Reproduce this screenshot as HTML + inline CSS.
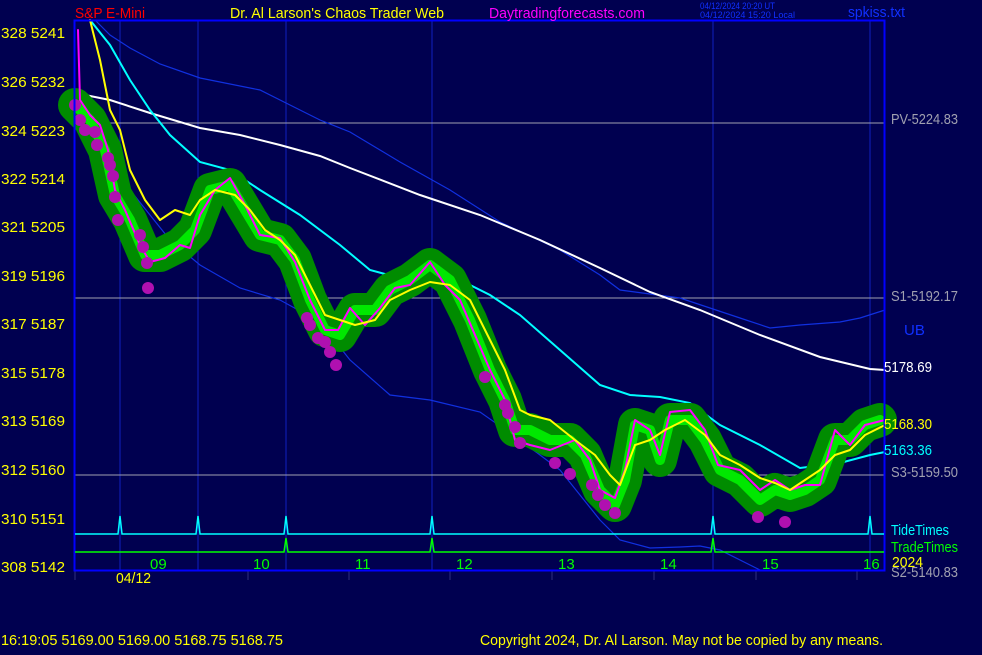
<!DOCTYPE html>
<html><head><style>
body{margin:0;background:#000050;width:982px;height:650px;overflow:hidden}
svg text{font-family:"Liberation Sans Narrow","Liberation Sans",sans-serif;font-size:15px}
</style></head><body>
<svg width="982" height="650" viewBox="0 0 982 650" xmlns="http://www.w3.org/2000/svg">
<rect width="982" height="650" fill="#000050"/>
<g stroke="#1020c0" stroke-width="1">
<line x1="120" y1="20" x2="120" y2="570"/><line x1="198" y1="20" x2="198" y2="570"/>
<line x1="286" y1="20" x2="286" y2="570"/><line x1="432" y1="20" x2="432" y2="570"/>
<line x1="713" y1="20" x2="713" y2="570"/><line x1="870" y1="20" x2="870" y2="570"/>
</g>
<g stroke="#a0a0b0" stroke-width="1">
<line x1="75" y1="123" x2="884" y2="123"/><line x1="75" y1="298" x2="884" y2="298"/><line x1="75" y1="475" x2="884" y2="475"/>
</g>
<g stroke="#303080" stroke-width="1">
<line x1="75" y1="571" x2="75" y2="580"/><line x1="248" y1="571" x2="248" y2="580"/><line x1="349" y1="571" x2="349" y2="580"/><line x1="450" y1="571" x2="450" y2="580"/><line x1="552" y1="571" x2="552" y2="580"/><line x1="654" y1="571" x2="654" y2="580"/><line x1="756" y1="571" x2="756" y2="580"/><line x1="857" y1="571" x2="857" y2="580"/>
</g>
<g fill="none" stroke="#1030e0" stroke-width="1.2">
<polyline points="95,20 110,35 130,48 160,64 200,78 260,90 290,105 320,120 350,132 380,150 400,162 450,190 500,222 560,250 600,275 620,290 680,298 740,318 770,328 800,325 840,322 860,318 885,310"/>
<polyline points="130,190 170,240 200,265 240,288 280,300 320,322 350,360 390,395 430,400 480,412 520,440 560,470 600,520 620,540 650,548 680,547 700,546 720,550 760,570"/>
</g>
<polyline fill="none" stroke="#ffffff" stroke-width="2" points="75,93 110,100 150,113 200,128 240,135 280,145 320,156 350,168 420,195 480,215 540,240 600,268 650,292 700,310 760,335 820,357 870,369 885,370"/>
<polyline fill="none" stroke="#00ffff" stroke-width="2" points="90,20 110,45 130,80 150,110 170,135 200,162 230,170 260,190 300,215 340,245 370,270 400,278 430,280 470,285 490,295 520,315 560,350 600,385 630,395 660,397 690,403 720,425 760,445 800,468 840,463 870,455 885,452"/>
<g stroke-linecap="round" stroke-linejoin="round" fill="none">
<polyline stroke="#008c00" stroke-width="34" points="75,105 90,120 105,150 115,195 130,220 145,255 160,255 180,245 195,230 210,190 230,185 245,210 260,235 280,240 295,260 310,300 325,330 340,335 355,310 375,310 390,290 410,280 430,265 450,280 470,320 490,370 505,400 515,430 530,430 550,440 570,440 585,455 600,490 615,505 625,480 635,425 650,430 660,460 670,420 690,420 705,440 720,470 740,480 760,500 775,490 790,495 805,490 820,480 835,440 850,440 865,425 880,420"/>
<polyline stroke="#00ff00" stroke-width="10" opacity="0.8" points="75,105 90,120 105,150 115,195 130,220 145,255 160,255 180,245 195,230 210,190 230,185 245,210 260,235 280,240 295,260 310,300 325,330 340,335 355,310 375,310 390,290 410,280 430,265 450,280 470,320 490,370 505,400 515,430 530,430 550,440 570,440 585,455 600,490 615,505 625,480 635,425 650,430 660,460 670,420 690,420 705,440 720,470 740,480 760,500 775,490 790,495 805,490 820,480 835,440 850,440 865,425 880,420"/>
<polyline stroke="#ff00ff" stroke-width="2" points="78,30 80,100 90,115 100,125 108,150 115,190 125,210 140,245 150,262 165,258 180,245 190,248 200,215 215,190 230,178 245,205 260,235 280,238 295,262 310,300 325,330 338,330 350,308 365,325 380,308 395,288 410,285 430,262 445,285 460,300 475,335 490,370 505,400 515,440 530,445 550,450 575,440 590,460 600,490 615,498 625,470 635,420 650,430 660,455 670,412 690,410 705,430 718,465 740,470 760,490 775,480 790,490 805,485 820,485 835,430 850,445 865,425 885,420"/>
<polyline stroke="#ffff00" stroke-width="2" points="90,20 100,60 110,110 120,130 130,170 145,200 160,220 175,210 190,215 200,200 215,190 235,195 250,210 265,230 280,240 295,255 310,285 325,315 340,320 355,325 375,320 390,300 410,290 430,282 450,285 470,300 490,340 505,370 520,410 530,415 550,420 575,440 595,455 610,475 620,485 635,445 650,440 665,430 685,420 705,435 720,455 740,465 760,478 775,483 790,490 805,480 820,470 835,455 850,450 865,435 885,425"/>
</g>
<g fill="#b010b0">
<circle cx="75" cy="105" r="6"/><circle cx="80" cy="120" r="6"/><circle cx="85" cy="130" r="6"/><circle cx="95" cy="132" r="6"/><circle cx="97" cy="145" r="6"/>
<circle cx="108" cy="158" r="6"/><circle cx="110" cy="165" r="6"/><circle cx="113" cy="176" r="6"/><circle cx="115" cy="197" r="6"/><circle cx="118" cy="220" r="6"/>
<circle cx="140" cy="235" r="6"/><circle cx="143" cy="247" r="6"/><circle cx="147" cy="263" r="6"/><circle cx="148" cy="288" r="6"/>
<circle cx="307" cy="318" r="6"/><circle cx="310" cy="325" r="6"/><circle cx="318" cy="338" r="6"/><circle cx="325" cy="342" r="6"/><circle cx="330" cy="352" r="6"/><circle cx="336" cy="365" r="6"/>
<circle cx="485" cy="377" r="6"/><circle cx="505" cy="405" r="6"/><circle cx="508" cy="413" r="6"/><circle cx="515" cy="427" r="6"/><circle cx="520" cy="443" r="6"/><circle cx="555" cy="463" r="6"/><circle cx="570" cy="474" r="6"/>
<circle cx="592" cy="485" r="6"/><circle cx="598" cy="495" r="6"/><circle cx="605" cy="505" r="6"/><circle cx="615" cy="513" r="6"/><circle cx="758" cy="517" r="6"/><circle cx="785" cy="522" r="6"/>
</g>
<rect x="74.5" y="20.5" width="810" height="550" fill="none" stroke="#0000ff" stroke-width="2"/>
<g fill="none" stroke="#00ffff" stroke-width="1.5">
<polyline points="75,534 118,534 120,516 122,534 196,534 198,516 200,534 284,534 286,516 288,534 430,534 432,516 434,534 711,534 713,516 715,534 868,534 870,516 872,534 884,534"/>
</g>
<polyline fill="none" stroke="#00ff00" stroke-width="1.5" points="75,552 284,552 286,538 288,552 430,552 432,538 434,552 711,552 713,538 715,552 884,552"/>
<g fill="#ffff00" lengthAdjust="spacingAndGlyphs">
<text x="1" y="38" textLength="64" lengthAdjust="spacingAndGlyphs">328  5241</text><text x="1" y="87" textLength="64" lengthAdjust="spacingAndGlyphs">326  5232</text><text x="1" y="136" textLength="64" lengthAdjust="spacingAndGlyphs">324  5223</text><text x="1" y="184" textLength="64" lengthAdjust="spacingAndGlyphs">322  5214</text>
<text x="1" y="232" textLength="64" lengthAdjust="spacingAndGlyphs">321  5205</text><text x="1" y="281" textLength="64" lengthAdjust="spacingAndGlyphs">319  5196</text><text x="1" y="329" textLength="64" lengthAdjust="spacingAndGlyphs">317  5187</text><text x="1" y="378" textLength="64" lengthAdjust="spacingAndGlyphs">315  5178</text>
<text x="1" y="426" textLength="64" lengthAdjust="spacingAndGlyphs">313  5169</text><text x="1" y="475" textLength="64" lengthAdjust="spacingAndGlyphs">312  5160</text><text x="1" y="524" textLength="64" lengthAdjust="spacingAndGlyphs">310  5151</text><text x="1" y="572" textLength="64" lengthAdjust="spacingAndGlyphs">308  5142</text>
<text x="116" y="583" textLength="35" lengthAdjust="spacingAndGlyphs">04/12</text><text x="892" y="567" textLength="31" lengthAdjust="spacingAndGlyphs">2024</text><text x="884" y="429" textLength="48" lengthAdjust="spacingAndGlyphs">5168.30</text>
<text x="1" y="645" textLength="282" lengthAdjust="spacingAndGlyphs">16:19:05  5169.00 5169.00 5168.75 5168.75</text>
<text x="480" y="645" textLength="403" lengthAdjust="spacingAndGlyphs">Copyright 2024, Dr. Al Larson. May not be copied by any means.</text>
<text x="230" y="18" textLength="214" lengthAdjust="spacingAndGlyphs">Dr. Al Larson's Chaos Trader Web</text>
</g>
<g fill="#00ff00"><text x="150" y="569">09</text><text x="253" y="569">10</text><text x="355" y="569">11</text><text x="456" y="569">12</text><text x="558" y="569">13</text><text x="660" y="569">14</text><text x="762" y="569">15</text><text x="863" y="569">16</text><text x="891" y="552" textLength="67" lengthAdjust="spacingAndGlyphs">TradeTimes</text></g>
<text x="891" y="535" fill="#00ffff" textLength="58" lengthAdjust="spacingAndGlyphs">TideTimes</text>
<text x="884" y="455" fill="#00ffff" textLength="48" lengthAdjust="spacingAndGlyphs">5163.36</text>
<text x="884" y="372" fill="#ffffff" textLength="48" lengthAdjust="spacingAndGlyphs">5178.69</text>
<g fill="#a0a0b0"><text x="891" y="124" textLength="67" lengthAdjust="spacingAndGlyphs">PV-5224.83</text><text x="891" y="301" textLength="67" lengthAdjust="spacingAndGlyphs">S1-5192.17</text><text x="891" y="477" textLength="67" lengthAdjust="spacingAndGlyphs">S3-5159.50</text><text x="891" y="577" textLength="67" lengthAdjust="spacingAndGlyphs">S2-5140.83</text></g>
<text x="904" y="335" fill="#1030ff">UB</text>
<text x="848" y="17" fill="#1030ff" textLength="57" lengthAdjust="spacingAndGlyphs">spkiss.txt</text>
<text x="75" y="18" fill="#ff0000" textLength="70" lengthAdjust="spacingAndGlyphs">S&amp;P E-Mini</text>
<text x="489" y="18" fill="#ff00ff" textLength="156" lengthAdjust="spacingAndGlyphs">Daytradingforecasts.com</text>
<text x="700" y="9" fill="#1030ff" style="font-size:9px" textLength="75" lengthAdjust="spacingAndGlyphs">04/12/2024 20:20 UT</text>
<text x="700" y="18" fill="#1030ff" style="font-size:9px" textLength="95" lengthAdjust="spacingAndGlyphs">04/12/2024 15:20 Local</text>
</svg>
</body></html>
